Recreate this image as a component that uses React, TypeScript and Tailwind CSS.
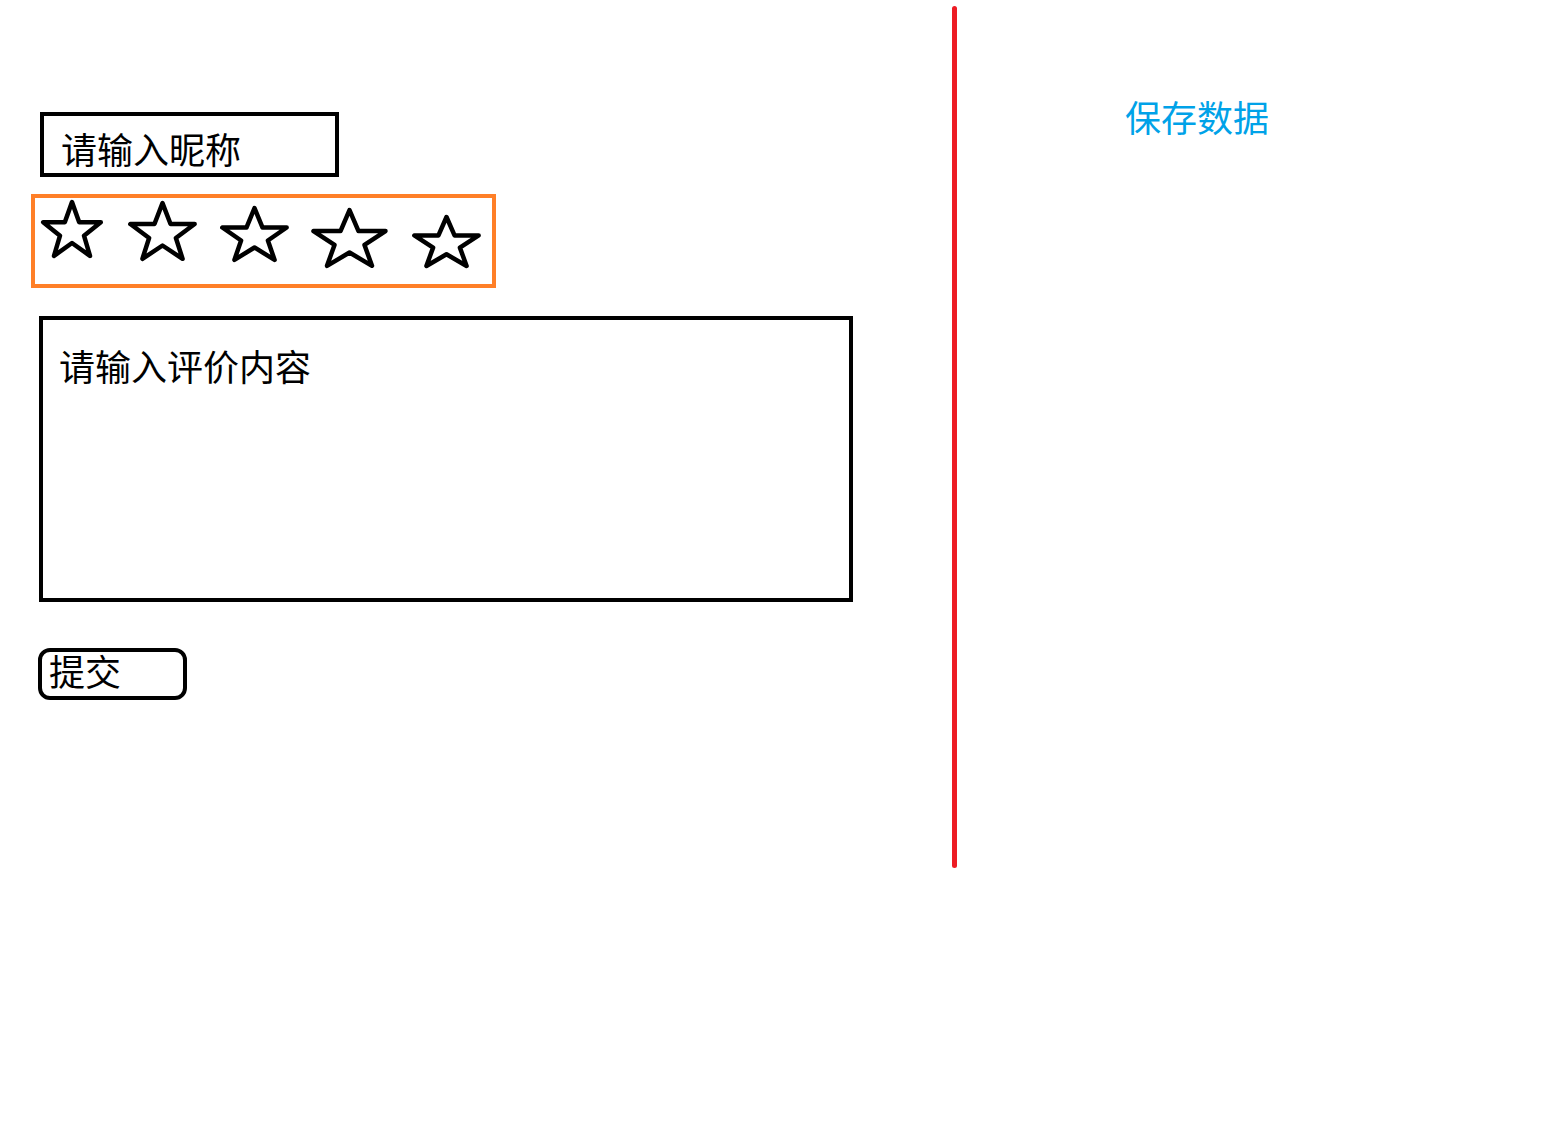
import React from "react";

// Hand-drawn wireframe: review form on the left, "save data" note on the right

const font = "font-['Microsoft_YaHei','Noto_Sans_CJK_SC',sans-serif]";

const stars = [
	{ w: 60, h: 56, cls: "ml-[7px] mt-[3px]" },
	{ w: 67, h: 58, cls: "ml-[27px] mt-[4px]" },
	{ w: 67, h: 54, cls: "ml-[25px] mt-[9px]" },
	{ w: 75, h: 58, cls: "ml-[24px] mt-[11px]" },
	{ w: 67, h: 51, cls: "ml-[26px] mt-[18px]" },
];

function Star({ w, h, className }: { w: number; h: number; className?: string }) {
	return (
		<svg
			width={w}
			height={h}
			viewBox="0 0 100 100"
			preserveAspectRatio="none"
			className={`overflow-visible shrink-0 ${className ?? ""}`}
		>
			<polygon
				points="50,2 62,38 98,38 70,62 80,98 50,75 20,98 30,62 2,38 38,38"
				fill="none"
				stroke="#000"
				strokeWidth={4.5}
				strokeLinejoin="round"
				vectorEffect="non-scaling-stroke"
			/>
		</svg>
	);
}

export default function App() {
	return (
		<div className={`flex h-[1125px] w-[1567px] bg-white text-black ${font}`}>
			{/* left: form */}
			<div className="flex w-[952px] shrink-0 flex-col items-start pl-[38px] pt-[112px]">
				<div className="ml-[2px] h-[65px] w-[299px] border-4 border-black pl-[17px] pt-[14px] text-[36px] leading-none">
					请输入昵称
				</div>

				<div className="-ml-[7px] mt-[17px] flex h-[94px] w-[465px] items-start border-4 border-[#ff7f27]">
					{stars.map((s, i) => (
						<Star key={i} w={s.w} h={s.h} className={s.cls} />
					))}
				</div>

				<div className="ml-[1px] mt-[28px] h-[286px] w-[814px] border-[4px] border-black pl-[16px] pt-[27px] text-[36px] leading-none">
					请输入评价内容
				</div>

				<button className="mt-[46px] flex h-[52px] w-[149px] items-start rounded-[12px] border-4 border-black pl-[7px] pt-0 text-[36px] leading-none">
					提交
				</button>
			</div>

			{/* divider */}
			<div className="mt-[6px] h-[862px] w-[5px] shrink-0 rounded-full bg-[#ed1c24]" />

			{/* right */}
			<div className="pl-[168px] pt-[98px]">
				<div className="text-[36px] leading-none text-[#00a2e8]">保存数据</div>
			</div>
		</div>
	);
}
